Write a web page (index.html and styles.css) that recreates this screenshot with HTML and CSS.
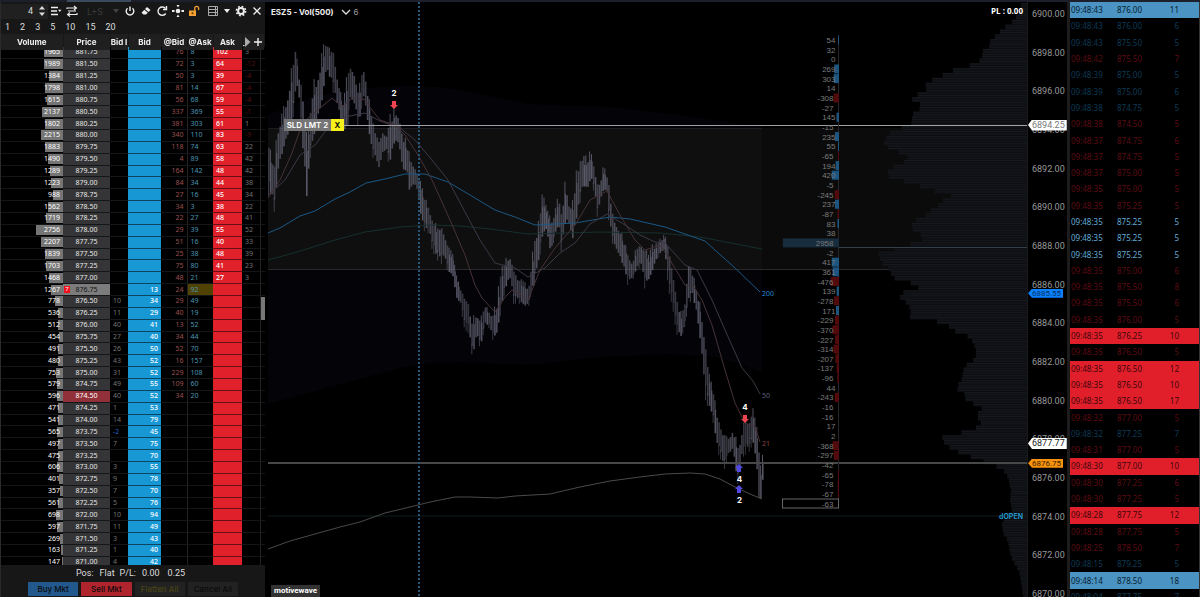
FILE: index.html
```html
<!DOCTYPE html>
<html lang="en">

<head>
    <meta charset="UTF-8">
    <meta name="viewport" content="width=device-width, initial-scale=1.0">
    <title>ESZ5 - Vol(500)</title>
    <link rel="stylesheet" href="styles.css">
</head>

<body>
    <div class="topbar"><span class="tab"></span></div>
    <div class="wrapper">
        <section class="dom">
            <div class="toolbar">
                <input class="qty" type="text" value="4" aria-label="Quantity">
                <button class="spin" aria-label="Step quantity">
                    <svg width="8" height="12" viewBox="0 0 8 12"><path d="M1 4.5L4 1l3 3.500z M1 7.500L4 11l3-3.500z" fill="#ddd"/></svg>
                </button>
                <button class="icon" aria-label="Menu">
                    <svg width="12" height="12" viewBox="0 0 12 12"><path d="M1 2.500h7M1 6h6M1 9.500h7" stroke="#eee" stroke-width="1.400"/><path d="M8 4.800h3.500L9.750 7z" fill="#eee"/></svg>
                </button>
                <button class="icon swap" aria-label="Swap">
                    <svg width="12" height="12" viewBox="0 0 12 12" fill="none" stroke="#eee" stroke-width="1.100"><path d="M1 4V3h9M8 1l2.500 2L8 5M2 6h8M11 8v1.500H2M4 7.500l-2.500 2 2.500 2"/></svg>
                </button>
                <select class="mode" aria-label="Mode"><option>L+S</option></select>
                <svg class="caret dim" width="8" height="6" viewBox="0 0 8 6"><path d="M1 1h6L4 5z" fill="#444"/></svg>
                <button class="icon" aria-label="Power">
                    <svg width="12" height="12" viewBox="0 0 12 12" fill="none" stroke="#eee" stroke-width="1.400"><path d="M3.500 3.300a3.800 3.800 0 1 0 5 0M6 1.500v4.500"/></svg>
                </button>
                <button class="icon" aria-label="Clear">
                    <svg width="12" height="12" viewBox="0 0 12 12"><path d="M7 2l3.500 3-2 2L5 4z M4.300 4.700L7.800 7.700 6 9.500H3.500L1.500 7.700z" fill="#eee"/></svg>
                </button>
                <button class="icon" aria-label="Reload">
                    <svg width="12" height="12" viewBox="0 0 12 12" fill="none" stroke="#eee" stroke-width="1.400"><path d="M9.700 8.500A4.200 4.200 0 1 1 9.500 3.500"/><path d="M10.500 1v3.500H7"/></svg>
                </button>
                <button class="icon" aria-label="Center">
                    <svg width="12" height="12" viewBox="0 0 12 12" fill="#eee"><circle cx="6" cy="6" r="2.300"/><path d="M4.500 0h3L6 2.600z M4.500 12h3L6 9.400z M0 5h2.500v2H0z M9.500 5H12v2H9.500z"/></svg>
                </button>
                <button class="icon" aria-label="Unlock">
                    <svg width="12" height="12" viewBox="0 0 12 12"><path d="M1 5.500h7V11H1z" fill="#f5a033"/><path d="M6.800 6V3.200a1.900 1.900 0 0 1 3.800 0V5" fill="none" stroke="#f5a033" stroke-width="1.300"/><circle cx="4.500" cy="8.200" r="1" fill="#5a3a10"/></svg>
                </button>
                <button class="icon layout" aria-label="Layout">
                    <svg width="12" height="12" viewBox="0 0 12 12" fill="none" stroke="#aaa"><path d="M1.500 1.500h9v9h-9z M1 4.500h10 M1 7.500h10 M8.500 2v8"/></svg>
                </button>
                <svg class="caret" width="8" height="6" viewBox="0 0 8 6"><path d="M1 1h6L4 5z" fill="#eee"/></svg>
                <button class="icon" aria-label="Settings">
                    <svg width="12" height="12" viewBox="0 0 12 12" fill="none" stroke="#eee"><circle cx="6" cy="6" r="2.900" stroke-width="2"/><circle cx="6" cy="6" r="4.600" stroke-width="1.600" stroke-dasharray="1.800 1.810"/></svg>
                </button>
                <button class="icon" aria-label="Close">
                    <svg width="12" height="12" viewBox="0 0 12 12" stroke="#eee" stroke-width="1.300"><path d="M2.500 2.500l7 7M9.500 2.500l-7 7"/></svg>
                </button>
            </div>
            <div class="sizes">
                <button>1</button>
                <button>2</button>
                <button>3</button>
                <button>5</button>
                <button>10</button>
                <button>15</button>
                <button>20</button>
            </div>
            <div class="ladder">
                <table>
                    <colgroup>
                        <col class="c-vol">
                        <col class="c-price">
                        <col class="c-pull">
                        <col class="c-bid">
                        <col class="c-at">
                        <col class="c-at">
                        <col class="c-ask">
                        <col class="c-stack">
                        <col>
                    </colgroup>
                    <thead>
                        <tr>
                            <th>Volume</th>
                            <th>Price</th>
                            <th>Bid I</th>
                            <th>Bid</th>
                            <th>@Bid</th>
                            <th>@Ask</th>
                            <th>Ask</th>
                            <th class="more" colspan="2">
                                <div>
                                    <svg width="8" height="10" viewBox="0 0 8 10"><path d="M0 8h1.500v1H0z" fill="#ddd"/><path d="M2 0l5.500 5L2 10z" fill="#aaa"/></svg>
                                    <button aria-label="Add column">
                                        <svg width="8" height="8" viewBox="0 0 8 8" stroke="#eee" stroke-width="1.400"><path d="M4 0v8M0 4h8"/></svg>
                                    </button>
                                </div>
                            </th>
                        </tr>
                    </thead>
                    <tbody id="ladder"></tbody>
                </table>
                <span class="thumb"></span>
            </div>
            <div class="status">
                <span>Pos:</span><span class="flat">Flat</span><span>P/L:</span><span class="pl">0.00</span><span>0.25</span>
            </div>
            <div class="actions">
                <button class="buy">Buy Mkt</button>
                <button class="sell">Sell Mkt</button>
                <button class="flatten">Flatten All</button>
                <button class="cancel">Cancel All</button>
            </div>
        </section>

        <section class="chart">
            <svg id="plot"></svg>
            <div class="title">
                <b>ESZ5 - Vol(500)</b>
                <svg width="10" height="6" viewBox="0 0 10 6" fill="none" stroke="#ddd" stroke-width="1.300"><path d="M1 1l4 4 4-4"/></svg>
                <span>6</span>
            </div>
            <b class="total">PL : 0.00</b>
            <div class="order"><span>SLD LMT 2</span><button>X</button></div>
            <b class="brand">motivewave</b>
        </section>

        <section class="axis">
            <ul id="prices"></ul>
            <span class="tag limit">6894.25</span>
            <span class="tag ma">6885.55</span>
            <span class="tag vwap">6877.77</span>
            <span class="tag last">6876.75</span>
        </section>

        <section class="tape">
            <table>
                <tbody id="tape"></tbody>
            </table>
        </section>
    </div>
    <script src="script.js"></script>
</body>

</html>
```
FILE: styles.css
```css
* {
    box-sizing: border-box;
}

body,
ul,
li {
    margin: 0;
    padding: 0;
}

body {
    display: flex;
    flex-direction: column;
    height: 100vh;
    background-color: #000;
    color: #ddd;
    font-family: Inter, Roboto, sans-serif;
    font-size: 8px;
    overflow: hidden;
}

button,
input,
select {
    margin: 0;
    padding: 0;
    border: 0;
    background: none;
    color: inherit;
    font: inherit;
}

button {
    cursor: pointer;
}

svg {
    display: block;
}

table {
    width: 100%;
    border-collapse: collapse;
    table-layout: fixed;
}

td,
th {
    padding: 0;
}

.topbar {
    flex: none;
    height: 2px;
    padding-left: 67px;
    background-color: #1d202a;
}

.topbar .tab {
    display: block;
    width: 64px;
    height: 2px;
    background-color: #3b4b5d;
}

.wrapper {
    flex: 1;
    min-height: 0;
    display: flex;
}

/* ladder */
.dom {
    flex: none;
    width: 265px;
    display: flex;
    flex-direction: column;
    background-color: #171717;
    border-left: 1px solid #2a2a2a;
}

.toolbar {
    display: flex;
    align-items: center;
    height: 18px;
}

.qty {
    width: 37px;
    height: 15px;
    padding-right: 5px;
    background-color: #202020;
    text-align: right;
    font-family: Roboto, sans-serif;
    font-size: 9px;
}

.spin {
    width: 10px;
    height: 15px;
    background-color: #202020;
}

.icon {
    width: 16px;
    height: 16px;
    display: flex;
    align-items: center;
    justify-content: center;
}

.icon.layout {
    margin-left: 3px;
}

.mode {
    width: 23px;
    margin-left: 7px;
    appearance: none;
    color: #3a3a3a;
    font-size: 9px;
}

.caret {
    flex: none;
    margin: 0 2px;
}

.sizes {
    display: flex;
    gap: 10px;
    height: 14px;
    padding-left: 4px;
    font-family: Roboto, sans-serif;
    font-size: 9px;
}

.sizes button {
    min-width: 5px;
    line-height: 12px;
}

.ladder {
    flex: 1;
    min-height: 0;
    position: relative;
    overflow: hidden;
    background-color: #000;
}

.ladder table {
    height: calc(100% + 7px);
    font-family: "Noto Sans", "Open Sans", sans-serif;
    font-size: 7px;
    line-height: 8px;
}

.c-vol { width: 62px; }
.c-price { width: 47px; }
.c-pull { width: 18px; }
.c-bid { width: 33px; }
.c-at { width: 26px; }
.c-ask { width: 29px; }
.c-stack { width: 18px; }

.ladder thead {
    position: sticky;
    top: 0;
    z-index: 1;
}

.ladder thead tr {
    height: 16px;
}

.ladder th {
    height: 16px;
    background-color: #1f1f1f;
    color: #eee;
    font-family: Inter, sans-serif;
    font-size: 8px;
    font-weight: 700;
    white-space: nowrap;
    border-right: 1px solid #171717;
}

.ladder .more div {
    display: flex;
    align-items: center;
    gap: 3px;
}

.ladder td {
    border-bottom: 1px solid #14171a;
    white-space: nowrap;
}

.ladder .vol {
    text-align: right;
    color: #fff;
}

.vol div {
    display: flex;
    justify-content: flex-end;
    position: relative;
    height: 10px;
    padding-right: 3px;
    line-height: 10px;
}

.vol i {
    position: absolute;
    right: 0;
    top: 0;
    height: 100%;
    background-color: #757575;
}

.vol span {
    position: relative;
}

.ladder .price {
    background-color: #353537;
    color: #e6e6e6;
    text-align: center;
    position: relative;
}

.ladder .price.current {
    background-color: #7c7c7c;
    color: #111;
}

.ladder .price.mark {
    background-color: #92303a;
    color: #fff;
}

.price em {
    position: absolute;
    left: 1px;
    top: 2px;
    width: 6px;
    height: 7px;
    line-height: 7px;
    font-size: 6px;
    font-style: normal;
    background-color: #f3101c;
    color: #fff;
}

.ladder .pull {
    padding-left: 3px;
    color: #747474;
}

.ladder .pull.neg {
    color: #2460c8;
}

.ladder .bid {
    background-color: #1897d5;
    color: #fff;
    text-align: right;
    padding-right: 3px;
    border-bottom-color: #0c4560;
    font-weight: 500;
}

.ladder .atbid {
    color: #9c5050;
    text-align: right;
    padding-right: 3px;
    border-right: 1px solid #222;
}

.ladder .atask {
    color: #4a94b4;
    padding-left: 3px;
}

.ladder .atask.current {
    background-color: #4f4202;
}

.ladder .ask {
    background-color: #e0202a;
    color: #fff;
    padding-left: 3px;
    border-bottom-color: #641016;
    font-weight: 500;
}

.ladder .stack {
    color: #747474;
    padding-left: 3px;
    border-right: 1px solid #222;
}

.ladder .stack.neg {
    color: #560d12;
}

.thumb {
    position: absolute;
    right: 0;
    top: 50%;
    width: 4px;
    height: 23px;
    background-color: #777;
}

.status {
    display: flex;
    gap: 5px;
    height: 16px;
    padding-left: 75px;
    font-family: Roboto, sans-serif;
    font-size: 9px;
    line-height: 16px;
}

.status .flat {
    margin-left: 1px;
}

.status .pl {
    margin: 0 3px 0 1px;
}

.actions {
    display: flex;
    gap: 3px;
    height: 16px;
    padding: 1px 27px;
}

.actions button {
    flex: 1;
    height: 14px;
    font-size: 8px;
    line-height: 14px;
    font-weight: 500;
    white-space: nowrap;
    color: #0a0a0a;
    background-color: #222;
}

.actions .buy { background-color: #22588c; }
.actions .sell { background-color: #b0242e; }
.actions .flatten { color: #4a4414; }

/* chart */
.chart {
    flex: 1;
    min-width: 0;
    position: relative;
    margin-left: 3px;
}

#plot {
    width: 100%;
    height: 100%;
}

#plot text {
    font-family: "Liberation Sans", Arial, sans-serif;
    font-size: 8px;
}

#plot .delta {
    fill: #7b7b7b;
    text-anchor: end;
}

#plot .count {
    fill: #fff;
    font-family: Inter, sans-serif;
    font-weight: 700;
    text-anchor: middle;
}

#plot .ma {
    font-family: "Noto Sans", sans-serif;
    font-size: 7px;
}

#plot .open {
    fill: #2194c8;
    font-family: Inter, sans-serif;
    font-size: 7px;
    font-weight: 700;
    text-anchor: end;
}

.title {
    position: absolute;
    left: 3px;
    top: 4px;
    display: flex;
    align-items: center;
    gap: 7px;
    font-size: 8px;
    line-height: 12px;
    color: #eee;
}

.title span {
    margin-left: -4px;
    color: #999;
}

.total {
    position: absolute;
    right: 4px;
    top: 3px;
    font-family: "Open Sans", sans-serif;
    font-size: 8px;
    line-height: 12px;
    color: #fff;
}

.order {
    position: absolute;
    left: 16px;
    display: flex;
    height: 12px;
    margin-top: -6px;
    font-weight: 600;
    line-height: 12px;
    color: #fff;
}

.order span {
    width: 47px;
    background-color: #757575;
    text-align: center;
    white-space: nowrap;
}

.order button {
    width: 13px;
    background-color: #f7f01c;
    color: #000;
}

.brand {
    position: absolute;
    left: 3px;
    bottom: 0;
    padding: 0 3px;
    line-height: 12px;
    font-family: Roboto, sans-serif;
    background-color: #333;
    color: #fff;
}

/* price scale */
.axis {
    flex: none;
    width: 43px;
    position: relative;
    overflow: hidden;
    border-left: 1px solid #1a1a1a;
    border-right: 3px solid #1c1c1c;
    font-family: Roboto, sans-serif;
    font-size: 9px;
}

.axis ul {
    display: flex;
    flex-direction: column;
    justify-content: space-between;
    height: calc(100% + 3px);
    padding: 7px 0 0 4px;
    list-style: none;
    line-height: 11px;
    color: #999;
}

.tag {
    position: absolute;
    left: 0;
    height: 11px;
    margin-top: -5px;
    padding: 0 2px 0 4px;
    line-height: 11px;
    clip-path: polygon(4px 0, 100% 0, 100% 100%, 4px 100%, 0 50%);
}

.tag.limit,
.tag.vwap {
    background-color: #fff;
    color: #222;
}

.tag.limit {
    color: #777;
}

.tag.ma,
.tag.last {
    height: 9px;
    margin-top: -4px;
    line-height: 9px;
    font-size: 8px;
}

.tag.ma {
    background-color: #0a80ff;
    color: #06305e;
}

.tag.last {
    background-color: #f7930c;
    color: #3a2200;
}

/* time and sales */
.tape {
    flex: none;
    width: 130px;
    overflow: hidden;
    border-right: 1px solid #333;
}

.tape table {
    height: calc(100% + 8px);
    font-family: "Noto Sans", "Open Sans", sans-serif;
    font-size: 8px;
    line-height: 10px;
}

.tape td {
    width: 46px;
    padding-left: 1px;
}

.tape td:last-child {
    width: auto;
    padding-right: 20px;
    text-align: right;
}

.tape .up { color: #0e3a56; }
.tape .down { color: #5c0c13; }
.tape .bright { color: #62aad4; }

.tape .bigup {
    background-color: #4a93c2;
    color: #08202f;
}

.tape .bigdown {
    background-color: #e11f2b;
    color: #3d060a;
}
```
FILE: script.js
```js
let volume = [1965, 1989, 1384, 1798, 1615, 2137, 1802, 2215, 1883, 1490, 1289, 1223, 988, 1562, 1719, 2756, 2207, 1839, 1703, 1468, 1267,
    778, 536, 512, 454, 491, 480, 753, 579, 596, 471, 541, 565, 497, 475, 606, 401, 357, 561, 698, 597, 269, 163, 147]
let atBid = [76, 72, 50, 81, 56, 337, 381, 340, 118, 4, 164, 84, 27, 34, 22, 29, 51, 25, 75, 48, 24, 29, 40, 13, 34, 52, 16, 229, 109, 34]
let atAsk = [8, 3, 3, 14, 68, 369, 303, 110, 74, 89, 142, 34, 16, 3, 27, 39, 16, 38, 80, 21, 92, 49, 19, 52, 44, 70, 157, 108, 60, 20]
let ask = [102, 64, 39, 67, 59, 55, 61, 83, 63, 58, 48, 44, 45, 38, 48, 55, 40, 48, 41, 27]
let stack = [3, -12, -4, -4, -4, -1, 1, -9, 22, 42, 42, 38, 34, 22, 41, 52, 33, 39, 23, 3]
let bid = [13, 34, 29, 41, 40, 50, 52, 52, 55, 52, 53, 79, 45, 75, 70, 55, 78, 70, 76, 94, 49, 43, 40, 42]
let pull = [10, 11, 40, 27, 26, 43, 31, 49, 40, 1, 14, -2, 7, '', 3, 9, 7, 5, 10, 11, 3, 1, 4]
let current = 20

function val(list, i) {
    return list[i] === undefined ? '' : list[i]
}

let html = ''
for (let i = 0; i < volume.length; i++) {
    let price = (881.75 - i * 0.25).toFixed(2)
    let cls = i === current ? ' current' : price === '874.50' ? ' mark' : ''
    let p = val(pull, i - current - 1)
    let s = val(stack, i)
    html += `<tr>
        <td class="vol"><div><i style="width:${Math.round(volume[i] * 0.0098)}px"></i><span>${volume[i]}</span></div></td>
        <td class="price${cls}">${i === current ? '<em>7</em>' : ''}${price}</td>
        <td class="pull${p < 0 ? ' neg' : ''}">${p}</td>
        <td class="bid">${val(bid, i - current)}</td>
        <td class="atbid">${val(atBid, i)}</td>
        <td class="atask${i === current ? ' current' : ''}">${val(atAsk, i)}</td>
        <td class="ask">${val(ask, i)}</td>
        <td class="stack${s < 0 ? ' neg' : ''}">${s}</td>
        <td></td>
    </tr>`
}
document.querySelector('#ladder').innerHTML = html
document.querySelector('.ladder').scrollTop = 3

let tape = [
    ['43', '876.00', 11, 'bigup'], ['43', '876.00', 6, 'up'], ['43', '875.50', 5, 'up'], ['42', '875.50', 7, 'down'],
    ['39', '875.00', 5, 'up'], ['39', '875.00', 6, 'up'], ['38', '874.75', 5, 'up'], ['38', '874.50', 5, 'down'],
    ['37', '874.75', 6, 'down'], ['37', '874.75', 5, 'down'], ['37', '875.00', 5, 'down'], ['35', '875.00', 5, 'down'],
    ['35', '875.25', 5, 'down'], ['35', '875.25', 5, 'bright'], ['35', '875.25', 5, 'bright'], ['35', '875.25', 5, 'bright'],
    ['35', '875.00', 6, 'down'], ['35', '875.50', 8, 'down'], ['35', '875.50', 6, 'down'], ['35', '876.00', 5, 'down'],
    ['35', '876.25', 10, 'bigdown'], ['35', '876.50', 5, 'down'], ['35', '876.50', 12, 'bigdown'], ['35', '876.50', 10, 'bigdown'],
    ['35', '876.50', 17, 'bigdown'], ['32', '877.00', 5, 'down'], ['32', '877.25', 7, 'up'], ['31', '877.00', 5, 'down'],
    ['30', '877.00', 10, 'bigdown'], ['30', '877.25', 6, 'down'], ['30', '877.25', 5, 'down'], ['28', '877.75', 12, 'bigdown'],
    ['28', '877.75', 5, 'down'], ['25', '878.50', 7, 'down'], ['15', '879.25', 5, 'up'], ['14', '878.50', 18, 'bigup'],
    ['04', '877.75', 7, 'up']
]
document.querySelector('#tape').innerHTML = tape.map(t =>
    `<tr class="${t[3]}"><td>09:48:${t[0]}</td><td>${t[1]}</td><td>${t[2]}</td></tr>`).join('')

let prices = ''
for (let p = 6900; p >= 6870; p -= 2) {
    prices += `<li>${p.toFixed(2)}</li>`
}
document.querySelector('#prices').innerHTML = prices

// chart data is stored on a 759 x 595 canvas that starts at 268, 2
const LEFT = 268, TOP = 2, W = 759, H = 595

// x, high, low
let bars = [
    [268, 148, 190], [272, 163, 200], [274, 165, 207], [277, 130, 175], [281, 120, 157], [284, 108, 145], [288, 90, 135],
    [292, 68, 115], [295, 45, 95], [297, 68, 85], [299, 80, 105], [302, 90, 150], [304, 125, 170], [306, 140, 197],
    [309, 120, 155], [312, 90, 145], [316, 80, 120], [320, 65, 110], [324, 45, 80], [326, 42, 72], [329, 52, 78],
    [332, 48, 85], [336, 75, 105], [340, 95, 120], [343, 105, 133], [347, 75, 125], [350, 66, 100], [353, 70, 105],
    [356, 85, 115], [358, 95, 125], [361, 75, 105], [363, 70, 100], [365, 80, 110], [368, 100, 130], [371, 115, 150],
    [374, 130, 157], [378, 140, 172], [382, 132, 155], [386, 135, 150], [389, 120, 163], [392, 118, 150], [394, 110, 142],
    [398, 115, 145], [402, 135, 172], [406, 145, 170], [409, 158, 195], [413, 165, 185], [416, 172, 190], [420, 185, 215],
    [424, 200, 228], [428, 208, 230], [432, 222, 248], [436, 228, 255], [440, 225, 260], [444, 235, 258], [448, 250, 272],
    [452, 255, 275], [456, 278, 298], [460, 290, 305], [464, 298, 325], [468, 305, 330], [471, 323, 350], [473, 320, 352],
    [476, 313, 335], [480, 322, 346], [484, 305, 325], [488, 312, 325], [492, 316, 337], [496, 305, 335], [500, 275, 310],
    [504, 264, 290], [509, 255, 278], [513, 270, 300], [518, 280, 300], [524, 285, 307], [528, 288, 305], [531, 265, 290],
    [534, 240, 280], [538, 225, 260], [542, 197, 235], [546, 210, 228], [550, 222, 255], [554, 215, 235], [558, 197, 225],
    [561, 215, 250], [565, 182, 220], [568, 205, 225], [572, 205, 240], [576, 175, 220], [580, 158, 195], [584, 160, 185],
    [588, 158, 190], [590, 153, 175], [594, 170, 192], [597, 185, 215], [600, 180, 200], [603, 168, 190], [606, 175, 190],
    [608, 183, 215], [611, 210, 237], [615, 223, 250], [620, 232, 260], [624, 245, 272], [628, 258, 284], [632, 263, 278],
    [636, 248, 270], [640, 244, 263], [644, 250, 284], [648, 258, 280], [652, 247, 270], [656, 245, 258], [660, 240, 253],
    [664, 236, 250], [668, 250, 285], [672, 275, 303], [676, 300, 330], [680, 315, 337], [684, 305, 325], [688, 260, 300],
    [692, 275, 295], [696, 290, 315], [700, 310, 345], [704, 340, 390], [708, 375, 405], [712, 390, 415], [716, 413, 445],
    [720, 428, 455], [723, 433, 467], [728, 438, 455], [732, 430, 450], [736, 443, 475], [738, 450, 482], [740, 438, 460],
    [742, 430, 455], [744, 415, 450], [748, 425, 450], [752, 410, 440], [756, 430, 465], [758, 445, 505], [760, 470, 500],
    [762, 458, 480]
]

let ma200 = [268, 233, 280, 228, 300, 216, 315, 211, 335, 199, 350, 192, 366, 183, 385, 179, 405, 174, 425, 174, 448, 182, 470, 195,
    495, 210, 515, 217, 535, 225, 575, 223, 610, 217, 630, 219, 665, 227, 685, 234, 705, 241, 735, 268, 760, 292]
let teal = [268, 260, 290, 254, 310, 248, 335, 240, 365, 232, 400, 227, 430, 225, 460, 226, 490, 229, 528, 234, 600, 232, 660, 233,
    700, 237, 762, 249]
let ma21 = [268, 198, 280, 180, 292, 153, 300, 130, 308, 118, 318, 110, 332, 98, 343, 107, 353, 97, 365, 100, 372, 110, 380, 120,
    395, 125, 405, 135, 418, 155, 432, 180, 450, 220, 465, 255, 475, 285, 482, 298, 495, 312, 505, 297, 512, 290, 520, 294, 528, 300,
    540, 270, 555, 248, 575, 225, 590, 200, 607, 191, 620, 215, 635, 240, 645, 250, 660, 245, 670, 260, 685, 285, 693, 286,
    702, 300, 712, 325, 725, 370, 735, 403, 745, 423, 755, 427, 760, 442]
let ma50 = [268, 195, 285, 180, 300, 155, 315, 145, 330, 125, 345, 117, 365, 113, 380, 121, 400, 128, 415, 140, 432, 160, 448, 180,
    465, 212, 480, 240, 495, 263, 515, 268, 528, 277, 545, 268, 560, 253, 575, 243, 590, 224, 607, 214, 625, 225, 640, 235,
    655, 242, 665, 243, 685, 265, 697, 270, 712, 300, 725, 330, 742, 368, 753, 381, 760, 394]
let vwap = [268, 549, 290, 541, 315, 534, 340, 527, 360, 522, 385, 513, 410, 507, 430, 502, 455, 497, 470, 497, 498, 498, 515, 496,
    550, 494, 580, 487, 610, 481, 640, 477, 665, 474, 690, 473, 705, 474, 720, 479, 735, 487, 750, 494, 762, 499]
let band = [268, 115, 310, 98, 350, 89, 400, 86, 440, 87, 480, 94, 528, 104, 610, 107, 680, 115, 740, 124, 762, 126,
    762, 372, 740, 364, 715, 357, 670, 354, 600, 357, 528, 365, 460, 362, 430, 363, 400, 368, 330, 387, 268, 404]

let deltas = [54, 32, 0, 269, 303, 14, -308, -27, 145, -15, 235, 55, -65, 194, 420, -5, -245, 237, -87, 83, 38, 2958, -2, 417, 361,
    -476, 139, -278, 171, -229, -370, -227, -314, -207, -137, -96, 44, -243, -16, -16, 17, 2, -368, -297, -42, -65, -78, -67, -63]

// y, left edge of the volume profile
let profile = [
    [3, 1021], [10, 1020], [20, 1014], [27, 1004], [33, 998], [40, 990], [45, 990], [50, 983], [57, 982], [63, 977], [66, 965],
    [68, 957], [72, 947], [77, 938], [81, 928], [85, 925], [87, 930], [91, 922], [98, 911], [102, 919], [107, 922], [111, 914],
    [117, 912], [122, 912], [126, 908], [130, 892], [135, 888], [140, 884], [145, 884], [150, 894], [155, 908], [161, 905],
    [165, 895], [170, 888], [175, 886], [180, 902], [185, 918], [190, 933], [195, 951], [200, 943], [205, 938], [210, 930],
    [215, 925], [218, 917], [224, 912], [230, 913], [236, 925], [241, 920], [246, 900], [250, 890], [254, 875], [258, 880],
    [265, 884], [270, 892], [275, 890], [280, 900], [285, 925], [290, 908], [294, 898], [299, 902], [303, 908], [310, 911],
    [316, 910], [319, 927], [323, 950], [328, 948], [334, 966], [338, 971], [348, 976], [358, 976], [362, 968], [370, 963],
    [378, 962], [382, 960], [387, 955], [392, 964], [400, 966], [404, 976], [406, 983], [412, 978], [418, 978], [421, 982],
    [427, 976], [433, 958], [435, 942], [440, 943], [444, 946], [450, 955], [455, 968], [461, 984], [467, 1000], [472, 1006],
    [480, 1009], [490, 1011], [500, 1010], [510, 1012], [516, 1005], [522, 1002], [532, 1003], [540, 1008], [552, 1010],
    [560, 1013], [570, 1019], [580, 1021], [597, 1023]
]

// value of column k at v, linear between the rows
function between(rows, v, k) {
    for (let i = 1; i < rows.length; i++) {
        if (v <= rows[i][0]) {
            let a = rows[i - 1]
            let b = rows[i]
            return a[k] + (b[k] - a[k]) * (v - a[0]) / (b[0] - a[0])
        }
    }
    return rows[rows.length - 1][k]
}

function draw() {
    let plot = document.querySelector('#plot')
    let w = plot.clientWidth
    let h = plot.clientHeight
    let X = x => Math.round((x - LEFT) * w / W * 10) / 10
    let Y = y => Math.round((y - TOP) * h / H * 10) / 10
    let out = ''

    function rect(x1, y1, x2, y2, fill, extra) {
        out += `<rect x="${X(x1)}" y="${Y(y1)}" width="${X(x2) - X(x1)}" height="${Y(y2) - Y(y1)}" fill="${fill}" ${extra || ''}/>`
    }
    function line(pts, color, width) {
        let s = ''
        for (let i = 0; i < pts.length; i += 2) {
            s += X(pts[i]) + ',' + Y(pts[i + 1]) + ' '
        }
        out += `<polyline points="${s}" fill="none" stroke="${color}" stroke-width="${width || 1}" stroke-linejoin="round"/>`
    }
    function text(x, y, str, attrs) {
        out += `<text x="${X(x)}" y="${Y(y)}" ${attrs}>${str}</text>`
    }
    function arrow(x, y, dir, color) {
        out += `<path transform="translate(${X(x)} ${Y(y)}) scale(1 ${dir})" d="M-2-4h4v4h2L0 4l-4-4h2z" fill="${color}"/>`
    }

    // bands
    let s = ''
    for (let i = 0; i < band.length; i += 2) {
        s += X(band[i]) + ',' + Y(band[i + 1]) + ' '
    }
    out += `<polygon points="${s}" fill="#040408"/>`
    rect(268, 128, 1027, 269, '#0b0b0b')
    rect(268, 128, 762, 269, '#0f0f10')
    rect(268, 128, 762, 129, '#1b1b22')
    rect(268, 269, 900, 270, '#29292c')
    rect(268, 515, 1027, 517, '#080e0f')

    // volume profile
    for (let y = 3; y < 597; y += 2.415) {
        let edge = between(profile, Math.floor(y / 4.83) * 4.83 + 2, 1)
        rect(edge, y, 1027, y + 2.415, '#0d0f12')
        rect(edge, y, 1027, y + 1.2, '#16181d')
    }
    rect(839, 247, 1027, 248, '#34414a')

    // bars, every few of them with a long wick
    let seed = 7
    for (let x = 268; x <= 762; x += 1.9) {
        seed = (seed * 16807) % 2147483647
        let r = seed / 2147483647
        let hi = between(bars, x, 1)
        let lo = between(bars, x, 2)
        let gap = (lo - hi) * 0.2
        let shade = `opacity="${(0.42 + r * 0.3).toFixed(2)}"`
        rect(x, hi + gap * r, x + 1.6, lo - gap * (1 - r), '#77778c', shade)
        if (r > 0.7) {
            rect(x, hi - gap * 0.7, x + 1, hi + gap * r, '#77778c', shade)
        }
        if (r < 0.25) {
            rect(x, lo - gap, x + 1, lo + gap * 0.7, '#77778c', shade)
        }
    }
    line(teal, '#16302e')
    line(ma200, '#1b5884')
    line(ma50, '#3d3846')
    line(ma21, '#463236')
    line(vwap, '#4a4a4a')

    // order, last price and session lines
    rect(344, 125, 1027, 126, '#a0a0a0')
    rect(268, 462, 1027, 464, '#484848')
    out += `<line x1="${X(419)}" y1="0" x2="${X(419)}" y2="${h}" stroke="#24587e" stroke-width="2" stroke-dasharray="2 2"/>`

    // delta per price
    rect(838, 35, 839, 508, '#26262a')
    deltas.forEach((d, i) => {
        let y = 40 + i * 9.66
        let size = Math.max(1, Math.abs(d) * (Math.abs(d) > 1000 ? 0.019 : 0.0175))
        if (Math.abs(d) > 45) {
            rect(839 - size, y - 4.5, 839, y + 4.5, d > 1000 ? '#172c3c' : d > 0 ? '#1c5580' : '#520a0c')
        }
        text(d < 0 || d > 1000 ? 833.5 : 835.5, y + 3, d, 'class="delta"')
    })
    out += `<rect x="${X(782.5)}" y="${Y(499)}" width="${X(838.5) - X(782.5)}" height="${Y(508) - Y(499)}" fill="none" stroke="#666"/>`

    // labels and signals
    text(762, 296, 200, 'class="ma" fill="#1f86d6"')
    text(762, 398, 50, 'class="ma" fill="#5e5e7a"')
    text(762, 446, 21, 'class="ma" fill="#8c4442"')
    text(394, 96, 2, 'class="count"')
    arrow(394, 105, 1, '#ee4450')
    text(745, 410, 4, 'class="count"')
    arrow(745, 419, 1, '#ee4450')
    arrow(739, 468, -1, '#5048e0')
    text(739.5, 482, 4, 'class="count"')
    arrow(739, 489, -1, '#5048e0')
    text(739.5, 503, 2, 'class="count"')
    text(1023, 519, 'dOPEN', 'class="open"')
    plot.innerHTML = out

    document.querySelector('.order').style.top = Y(125) + 'px'
    let tags = document.querySelectorAll('.tag')
    for (let i = 0; i < tags.length; i++) {
        tags[i].style.top = Y(13.5 + (6900 - tags[i].textContent) * 19.32) + 'px'
    }
}

draw()
window.onresize = draw
```
